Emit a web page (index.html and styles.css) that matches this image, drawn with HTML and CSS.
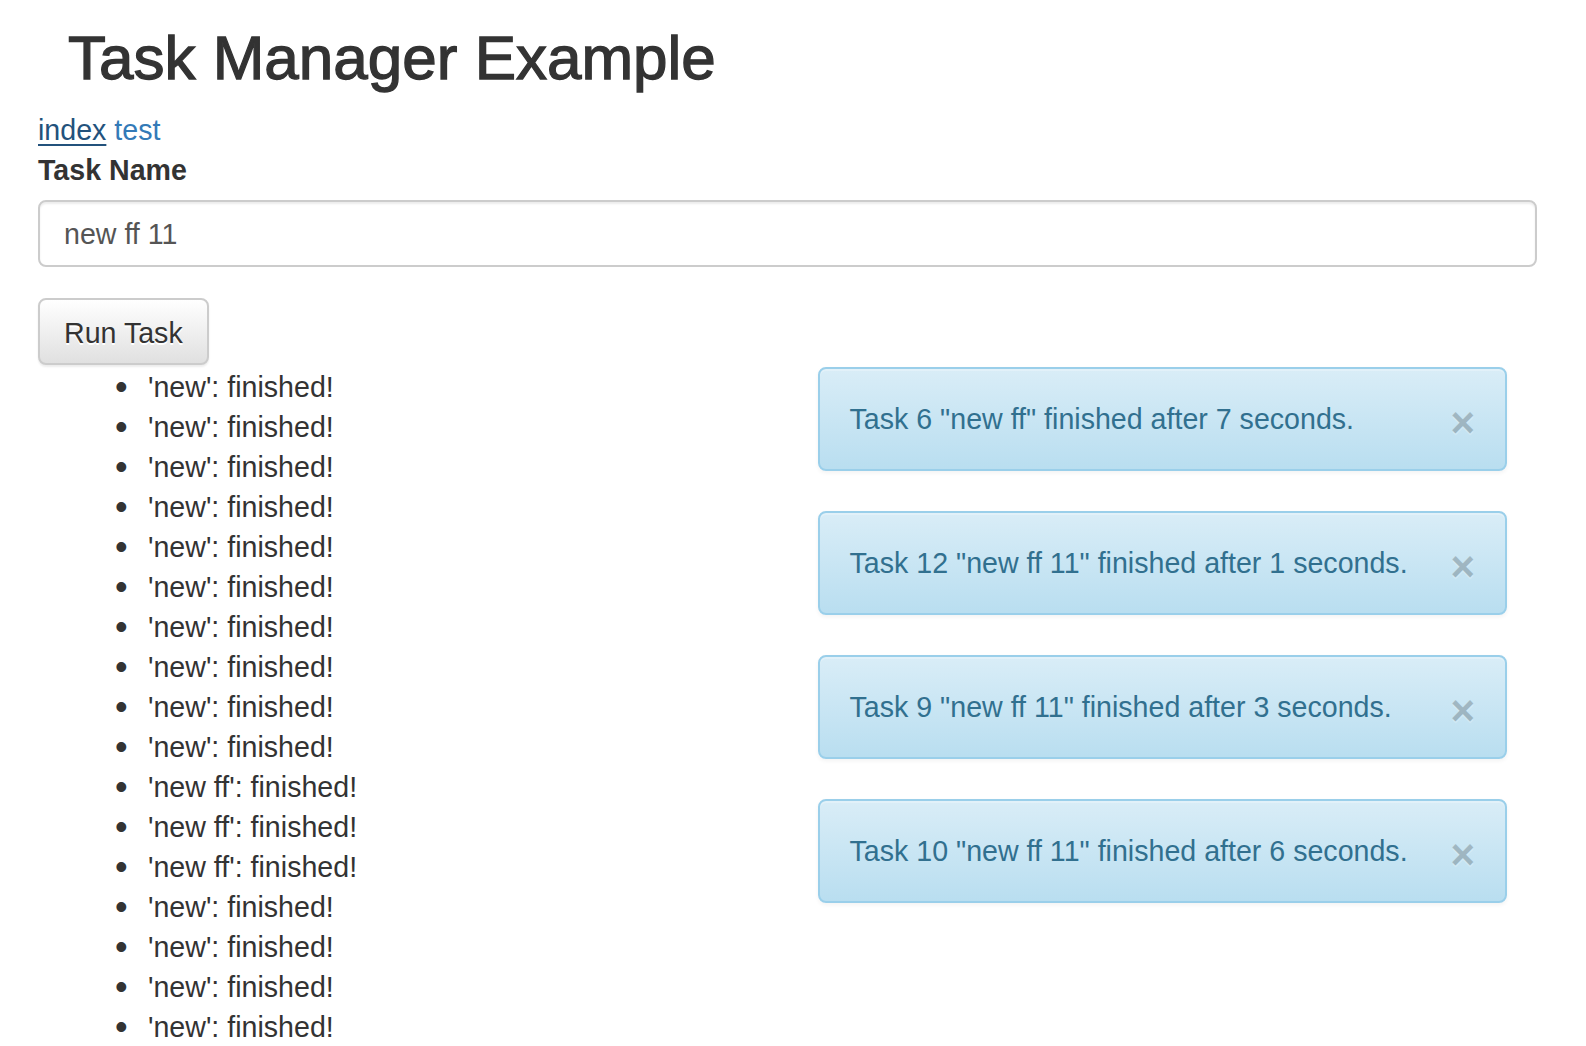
FILE: index.html
```html
<!DOCTYPE html>
<html lang="en">
<head>
<meta charset="utf-8">
<title>Task Manager Example</title>
<link rel="stylesheet" href="styles.css">
</head>
<body>
<div class="container">
  <header class="page-header">
    <h1 class="title">Task Manager Example</h1>
  </header>
  <nav class="links"><a class="link link-visited" href="#">index</a> <a class="link" href="#">test</a></nav>
  <form class="task-form">
    <div class="form-group">
      <label class="form-label" for="taskname">Task Name</label>
      <input class="form-control" id="taskname" type="text" value="new ff 11">
    </div>
    <button class="btn" type="button">Run Task</button>
  </form>
  <div class="columns">
    <div class="col">
      <ul class="task-list">
        <li>'new': finished!</li>
        <li>'new': finished!</li>
        <li>'new': finished!</li>
        <li>'new': finished!</li>
        <li>'new': finished!</li>
        <li>'new': finished!</li>
        <li>'new': finished!</li>
        <li>'new': finished!</li>
        <li>'new': finished!</li>
        <li>'new': finished!</li>
        <li>'new ff': finished!</li>
        <li>'new ff': finished!</li>
        <li>'new ff': finished!</li>
        <li>'new': finished!</li>
        <li>'new': finished!</li>
        <li>'new': finished!</li>
        <li>'new': finished!</li>
      </ul>
    </div>
    <div class="col">
      <div class="alert"><span class="alert-text">Task 6 "new ff" finished after 7 seconds.</span><button class="close" type="button">×</button></div>
      <div class="alert"><span class="alert-text">Task 12 "new ff 11" finished after 1 seconds.</span><button class="close" type="button">×</button></div>
      <div class="alert"><span class="alert-text">Task 9 "new ff 11" finished after 3 seconds.</span><button class="close" type="button">×</button></div>
      <div class="alert"><span class="alert-text">Task 10 "new ff 11" finished after 6 seconds.</span><button class="close" type="button">×</button></div>
    </div>
  </div>
</div>
</body>
</html>
```

FILE: styles.css
```css
* { box-sizing: border-box; }

html, body {
  margin: 0;
  padding: 0;
  background: #fff;
}

body {
  font-family: "Liberation Sans", Helvetica, Arial, sans-serif;
  font-size: 28.6px;
  line-height: 40px;
  color: #333;
}

.container {
  margin-left: 38px;
  width: 1499px;
}

.page-header {
  padding: 0 30px;
}

.title {
  margin: 24px 0 18px;
  font-size: 62px;
  line-height: 68px;
  font-weight: normal;
  -webkit-text-stroke: 1.3px #333;
  color: #333;
}

.links {
  height: 40px;
}

.link {
  color: #337ab7;
  text-decoration: none;
}

.link-visited {
  color: #23527c;
  text-decoration: underline;
  text-decoration-thickness: 2px;
  text-underline-offset: 4px;
}

.task-form {
  margin: 0;
}

.form-group {
  margin-bottom: 31px;
}

.form-label {
  display: block;
  font-weight: bold;
  margin-bottom: 10px;
}

.form-control {
  display: block;
  width: 100%;
  height: 67px;
  padding: 13px 24px 11px;
  font-family: inherit;
  font-size: 28.6px;
  line-height: 40px;
  color: #555;
  background: #fff;
  border: 2px solid #ccc;
  border-radius: 8px;
  box-shadow: inset 0 2px 2px rgba(0, 0, 0, 0.075);
  outline: none;
}

.btn {
  display: block;
  height: 67px;
  padding: 13px 24px 11px;
  font-family: inherit;
  font-size: 28.6px;
  line-height: 40px;
  color: #333;
  background-image: linear-gradient(to bottom, #fff 0, #e0e0e0 100%);
  border: 2px solid #ccc;
  border-radius: 8px;
  text-shadow: 0 2px 0 #fff;
  box-shadow: inset 0 2px 0 rgba(255, 255, 255, 0.15), 0 2px 2px rgba(0, 0, 0, 0.075);
}

.columns {
  display: grid;
  grid-template-columns: 1fr 1fr;
  margin-top: 1px;
}

.col {
  padding: 0 30px;
}

.task-list {
  margin: 1px 0 20px;
  padding-left: 80px;
  list-style: none;
}

.task-list li::before {
  content: "•";
  display: inline-block;
  width: 33px;
  margin-left: -33px;
  font-size: 36px;
  vertical-align: top;
}

.alert {
  position: relative;
  margin: 1px 0 40px;
  padding: 30px 70px 30px 30px;
  color: #31708f;
  background-image: linear-gradient(to bottom, #d9edf7 0, #b9def0 100%);
  border: 2px solid #9acfea;
  border-radius: 8px;
  box-shadow: inset 0 2px 0 rgba(255, 255, 255, 0.25), 0 2px 4px rgba(0, 0, 0, 0.05);
}

.alert-text {
  display: block;
}

.close {
  position: absolute;
  top: 33px;
  right: 30px;
  padding: 0;
  margin: 0;
  border: 0;
  background: transparent;
  font-family: inherit;
  font-size: 42px;
  line-height: 42px;
  font-weight: bold;
  color: #000;
  opacity: 0.2;
  text-shadow: 0 2px 0 #fff;
}
```
